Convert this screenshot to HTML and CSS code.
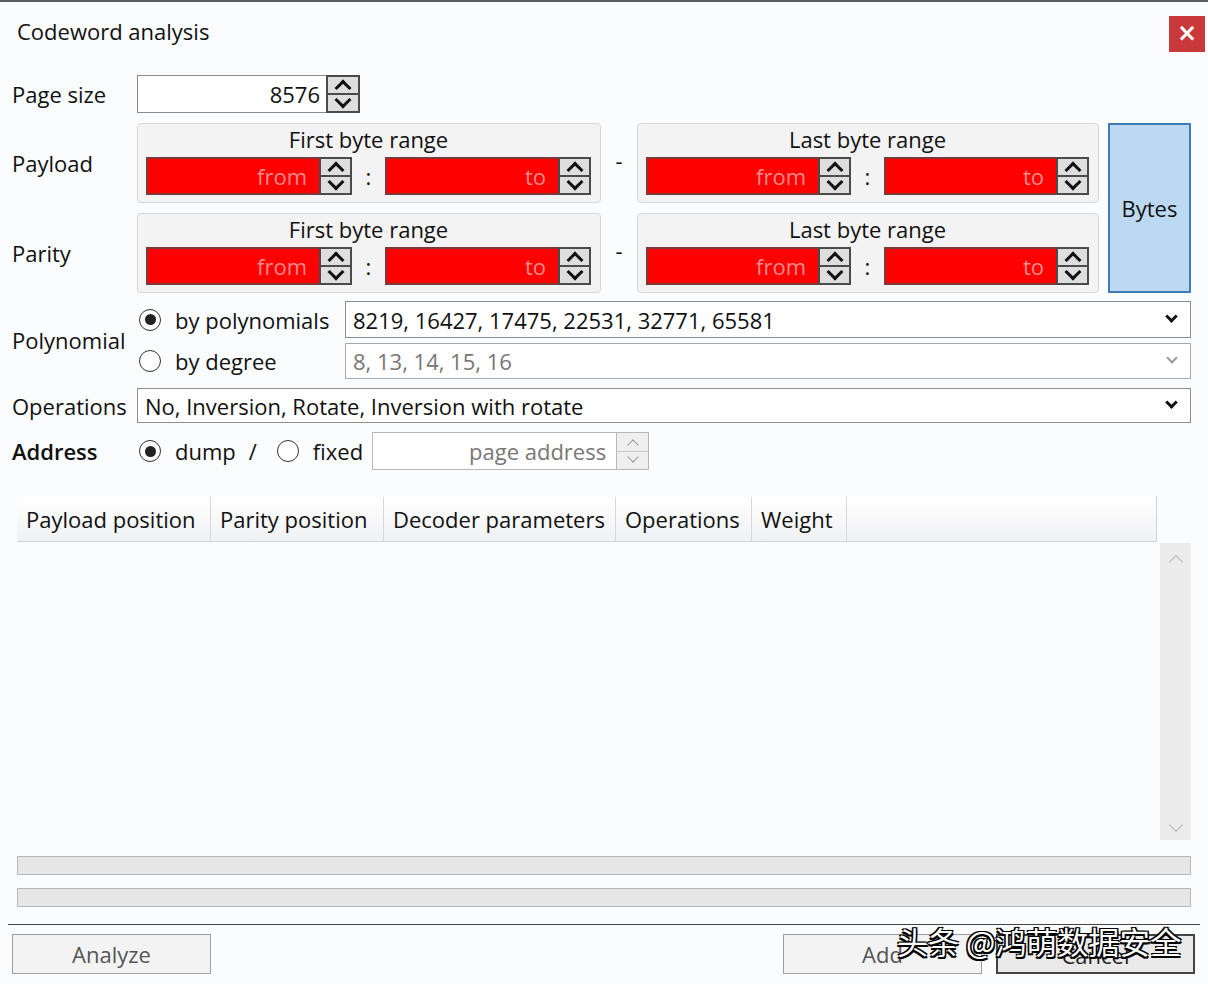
FILE: index.html
```html
<!DOCTYPE html>
<html>
<head>
  <meta charset="utf-8">
  <link rel="stylesheet" href="styles.css">
</head>
<body>
  <div class="window">
    <div class="titlebar">
      <div class="title">Codeword analysis</div>
      <div class="close-btn">×</div>
    </div>

    <div class="form">
      <div class="row page-row">
        <div class="label">Page size</div>
        <div class="spinbox page-size">
          <div class="spin-field">8576</div>
          <div class="spinner"><span class="up"></span><span class="down"></span></div>
        </div>
      </div>

      <div class="row ranges-row">
        <div class="range-labels">
          <div class="label">Payload</div>
          <div class="label">Parity</div>
        </div>
        <div class="ranges">
          <div class="group">
            <div class="group-title">First byte range</div>
            <div class="group-body">
              <div class="spinbox red"><div class="spin-field">from</div><div class="spinner"><span class="up"></span><span class="down"></span></div></div>
              <div class="colon">:</div>
              <div class="spinbox red"><div class="spin-field">to</div><div class="spinner"><span class="up"></span><span class="down"></span></div></div>
            </div>
          </div>
          <div class="dash">-</div>
          <div class="group">
            <div class="group-title">Last byte range</div>
            <div class="group-body">
              <div class="spinbox red"><div class="spin-field">from</div><div class="spinner"><span class="up"></span><span class="down"></span></div></div>
              <div class="colon">:</div>
              <div class="spinbox red"><div class="spin-field">to</div><div class="spinner"><span class="up"></span><span class="down"></span></div></div>
            </div>
          </div>
          <div class="bytes-btn">Bytes</div>

          <div class="group">
            <div class="group-title">First byte range</div>
            <div class="group-body">
              <div class="spinbox red"><div class="spin-field">from</div><div class="spinner"><span class="up"></span><span class="down"></span></div></div>
              <div class="colon">:</div>
              <div class="spinbox red"><div class="spin-field">to</div><div class="spinner"><span class="up"></span><span class="down"></span></div></div>
            </div>
          </div>
          <div class="dash">-</div>
          <div class="group">
            <div class="group-title">Last byte range</div>
            <div class="group-body">
              <div class="spinbox red"><div class="spin-field">from</div><div class="spinner"><span class="up"></span><span class="down"></span></div></div>
              <div class="colon">:</div>
              <div class="spinbox red"><div class="spin-field">to</div><div class="spinner"><span class="up"></span><span class="down"></span></div></div>
            </div>
          </div>
        </div>
      </div>

      <div class="row poly-row">
        <div class="label">Polynomial</div>
        <div class="poly-grid">
          <div class="radio-item"><span class="radio checked"></span>by polynomials</div>
          <div class="combo"><span>8219, 16427, 17475, 22531, 32771, 65581</span><span class="combo-arrow"></span></div>
          <div class="radio-item"><span class="radio"></span>by degree</div>
          <div class="combo disabled"><span>8, 13, 14, 15, 16</span><span class="combo-arrow"></span></div>
        </div>
      </div>

      <div class="row ops-row">
        <div class="label">Operations</div>
        <div class="combo"><span>No, Inversion, Rotate, Inversion with rotate</span><span class="combo-arrow"></span></div>
      </div>

      <div class="row addr-row">
        <div class="label strong">Address</div>
        <div class="addr-controls">
          <div class="radio-item"><span class="radio checked"></span>dump</div>
          <div class="slash">/</div>
          <div class="radio-item"><span class="radio"></span>fixed</div>
          <div class="spinbox addr disabled">
            <div class="spin-field">page address</div>
            <div class="spinner"><span class="up"></span><span class="down"></span></div>
          </div>
        </div>
      </div>
    </div>

    <div class="table">
      <div class="table-main">
        <div class="table-head">
          <div class="th" style="width: 194px">Payload position</div>
          <div class="th" style="width: 173px">Parity position</div>
          <div class="th" style="width: 232px">Decoder parameters</div>
          <div class="th" style="width: 136px">Operations</div>
          <div class="th" style="width: 95px">Weight</div>
          <div class="th th-fill"></div>
        </div>
        <div class="table-body"></div>
      </div>
      <div class="vscroll">
        <span class="vs-up"></span>
        <span class="vs-down"></span>
      </div>
    </div>

    <div class="progress"></div>
    <div class="progress"></div>

    <div class="separator"></div>

    <div class="footer">
      <div class="btn">Analyze</div>
      <div class="footer-right">
        <div class="btn">Add</div>
        <div class="btn default">Cancel</div>
      </div>
      <div class="watermark">头条 @鸿萌数据安全</div>
    </div>
  </div>
</body>
</html>
```

FILE: styles.css
```css
body {
  margin: 0;
  font-family: "Open Sans", "Noto Sans", sans-serif;
  font-size: 22px;
  color: #111;
  background: #fbfcfd;
}

.window {
  width: 1208px;
  height: 984px;
  box-sizing: border-box;
  border-top: 2px solid #5c5c5c;
  background: #fbfcfd;
  overflow: hidden;
}

.titlebar {
  display: flex;
  justify-content: space-between;
  align-items: flex-start;
  height: 73px;
  padding: 0 3px 0 17px;
  box-sizing: border-box;
}

.title {
  margin-top: 14px;
  line-height: 30px;
}

.close-btn {
  margin-top: 14px;
  width: 36px;
  height: 36px;
  background: #c9383a;
  color: #fff;
  font-family: "DejaVu Sans", sans-serif;
  font-weight: bold;
  font-size: 24px;
  line-height: 34px;
  text-align: center;
}

/* form */

.form {
  padding: 0 17px 0 12px;
}

.row {
  display: grid;
  grid-template-columns: 125px 1fr;
  align-items: center;
}

.label {
  line-height: 30px;
  white-space: nowrap;
}

.label.strong {
  font-weight: 600;
}

.page-row {
  height: 38px;
}

.spinbox {
  display: flex;
  height: 38px;
  box-sizing: border-box;
}

.spin-field {
  flex: 1;
  border: 1px solid #8a8a8a;
  border-right: none;
  background: #fff;
  text-align: right;
  padding-right: 6px;
  line-height: 36px;
}

.page-size {
  width: 223px;
}

.spinner {
  width: 34px;
  display: flex;
  flex-direction: column;
  border: 2px solid #4a4a4a;
  background: #dedede;
  box-sizing: border-box;
}

.spinner span {
  flex: 1;
  display: flex;
  align-items: center;
  justify-content: center;
}

.spinner .up {
  border-bottom: 2px solid #4a4a4a;
}

.spinner span::before {
  content: "";
  width: 9px;
  height: 9px;
  border-left: 3.5px solid #111;
  border-top: 3.5px solid #111;
}

.spinner .up::before {
  transform: translateY(3px) rotate(45deg);
}

.spinner .down::before {
  transform: translateY(-3px) rotate(225deg);
}

/* ranges */

.ranges-row {
  margin-top: 10px;
  align-items: stretch;
}

.range-labels {
  display: grid;
  grid-template-rows: 80px 80px;
  row-gap: 10px;
  align-items: center;
}

.ranges {
  display: grid;
  grid-template-columns: 464px 36px 462px 1fr;
  grid-template-rows: 80px 80px;
  row-gap: 10px;
}

.group {
  border: 1px solid #d6d6d6;
  border-radius: 4px;
  background: #f3f3f3;
  padding: 0 9px 6px 8px;
  box-sizing: border-box;
}

.group-title {
  text-align: center;
  line-height: 30px;
  height: 33px;
}

.group-body {
  display: grid;
  grid-template-columns: 1fr 33px 1fr;
  align-items: center;
}

.spinbox.red .spin-field {
  background: #ff0000;
  color: #f78a8a;
  border: 2px solid #7a3a3a;
  border-right: none;
  line-height: 34px;
  padding-right: 12px;
}

.spinbox.red .spinner {
  width: 33px;
}

.colon {
  text-align: center;
}

.dash {
  text-align: center;
  align-self: center;
  margin-top: -6px;
}

.bytes-btn {
  grid-row: 1 / 3;
  grid-column: 4;
  margin-left: 9px;
  background: #bcd9f1;
  border: 2px solid #3d7db5;
  display: flex;
  align-items: center;
  justify-content: center;
}

/* polynomial */

.poly-row {
  margin-top: 8px;
}

.poly-grid {
  display: grid;
  grid-template-columns: 208px 1fr;
  grid-template-rows: 37px 36px;
  row-gap: 5px;
  align-items: stretch;
}

.radio-item {
  display: flex;
  align-items: center;
  white-space: nowrap;
}

.radio {
  width: 20px;
  height: 20px;
  border: 1.5px solid #333;
  border-radius: 50%;
  margin: 0 14px 0 2px;
  display: flex;
  align-items: center;
  justify-content: center;
  background: #fff;
  flex: none;
}

.radio.checked::after {
  content: "";
  width: 11px;
  height: 11px;
  border-radius: 50%;
  background: #222;
}

.combo {
  display: flex;
  justify-content: space-between;
  align-items: center;
  border: 1px solid #8e8e8e;
  background: #fff;
  padding: 0 14px 0 7px;
  box-sizing: border-box;
  height: 100%;
}

.combo-arrow {
  width: 6px;
  height: 6px;
  border-right: 3.5px solid #111;
  border-bottom: 3.5px solid #111;
  transform: translateY(-3px) rotate(45deg);
}

.combo.disabled {
  color: #777;
  border-color: #a8a8a8;
}

.combo.disabled .combo-arrow {
  border-width: 0 2px 2px 0;
  border-color: #9a9a9a;
}

.ops-row {
  margin-top: 9px;
  height: 35px;
}

/* address */

.addr-row {
  margin-top: 9px;
  height: 38px;
}

.addr-controls {
  display: flex;
  align-items: center;
  height: 38px;
}

.slash {
  margin: 0 18px 0 13px;
}

.spinbox.addr {
  width: 277px;
  margin-left: 9px;
}

.spinbox.addr .spin-field {
  border-color: #b8b8b8;
  color: #777;
  padding-right: 10px;
}

.spinbox.addr .spinner {
  border: 1px solid #b8b8b8;
  background: #efefef;
  width: 33px;
}

.spinbox.addr .up {
  border-bottom: 1px solid #c8c8c8;
}

.spinbox.addr .spinner span::before {
  width: 7px;
  height: 7px;
  border-width: 1.5px;
  border-color: #9a9a9a;
}

/* table */

.table {
  display: flex;
  margin: 27px 17px 0 17px;
  height: 349px;
}

.table-main {
  flex: 1;
  display: flex;
  flex-direction: column;
}

.table-head {
  display: flex;
  height: 44px;
  border-bottom: 1px solid #cfd2d6;
  border-right: 1px solid #cfd2d6;
  background: linear-gradient(#ffffff, #f0f1f3);
}

.th {
  box-sizing: border-box;
  padding-left: 9px;
  line-height: 44px;
  border-right: 1px solid #d8d8d8;
  white-space: nowrap;
}

.th-fill {
  flex: 1;
  border-right: none;
}

.table-body {
  flex: 1;
  background: #fafcfd;
}

.vscroll {
  width: 31px;
  margin: 46px 0 6px 3px;
  background: #ececec;
  display: flex;
  flex-direction: column;
  justify-content: space-between;
  align-items: center;
  padding: 14px 0 10px;
  box-sizing: border-box;
}

.vscroll span {
  width: 9px;
  height: 9px;
  border-left: 1px solid #b5b5b5;
  border-top: 1px solid #b5b5b5;
}

.vs-up {
  transform: rotate(45deg);
}

.vs-down {
  transform: rotate(225deg);
}

/* progress */

.progress {
  margin: 10px 17px 0 17px;
  height: 19px;
  box-sizing: border-box;
  border: 1px solid #b8b8b8;
  background: #e6e6e6;
}

.progress + .progress {
  margin-top: 13px;
}

.separator {
  margin: 17px 8px 0 8px;
  height: 1px;
  background: #444;
}

/* footer */

.footer {
  position: relative;
  display: flex;
  justify-content: space-between;
  padding: 9px 13px 0 12px;
}

.footer-right {
  display: flex;
  gap: 14px;
}

.btn {
  width: 199px;
  height: 40px;
  box-sizing: border-box;
  border: 1px solid #9e9e9e;
  background: #f3f3f4;
  color: #555;
  text-align: center;
  line-height: 38px;
}

.btn.default {
  border: 2px solid #444;
  color: #222;
  background: #e9e9ea;
}

.watermark {
  position: absolute;
  left: 897px;
  top: -7px;
  font-family: "Noto Sans CJK SC", sans-serif;
  font-size: 31px;
  color: #fff;
  white-space: nowrap;
  text-shadow: 1.5px 1.5px 0 #000, -1.5px -1.5px 0 #000, 1.5px -1.5px 0 #000, -1.5px 1.5px 0 #000, 0 1.5px 0 #000, 0 -1.5px 0 #000;
}
```
